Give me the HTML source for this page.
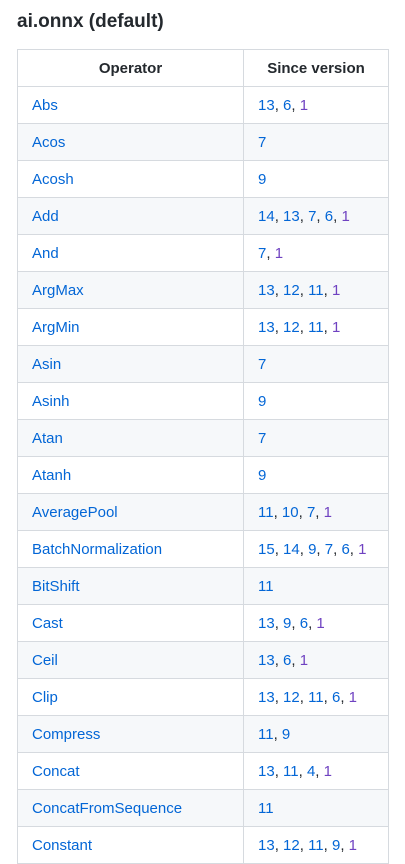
<!DOCTYPE html>
<html><head><meta charset="utf-8"><style>
body{margin:0;background:#fff;font-family:"Liberation Sans",sans-serif;color:#24292e;width:405px;height:863px;overflow:hidden}
h3{position:absolute;left:17px;top:9px;margin:0;font-size:19px;font-weight:bold;line-height:26px}
table{position:absolute;left:17px;top:49px;border-collapse:collapse;font-size:15px}
td,th{border:1px solid #d6dadf;height:36px;padding:0 14px;box-sizing:border-box}
th{text-align:center;font-weight:bold;font-size:15px;background:#fff}
tr{height:37px}
tr:nth-child(odd) td{background:#f6f8fa}
.a{color:#0366d6}.p{color:#6f42c1}
col.c1{width:226px}col.c2{width:145px}
</style></head><body>
<h3>ai.onnx (default)</h3>
<table><colgroup><col class="c1"><col class="c2"></colgroup>
<tr><th>Operator</th><th>Since version</th></tr>
<tr><td class="a">Abs</td><td><span class="a">13</span>, <span class="a">6</span>, <span class="p">1</span></td></tr>
<tr><td class="a">Acos</td><td><span class="a">7</span></td></tr>
<tr><td class="a">Acosh</td><td><span class="a">9</span></td></tr>
<tr><td class="a">Add</td><td><span class="a">14</span>, <span class="a">13</span>, <span class="a">7</span>, <span class="a">6</span>, <span class="p">1</span></td></tr>
<tr><td class="a">And</td><td><span class="a">7</span>, <span class="p">1</span></td></tr>
<tr><td class="a">ArgMax</td><td><span class="a">13</span>, <span class="a">12</span>, <span class="a">11</span>, <span class="p">1</span></td></tr>
<tr><td class="a">ArgMin</td><td><span class="a">13</span>, <span class="a">12</span>, <span class="a">11</span>, <span class="p">1</span></td></tr>
<tr><td class="a">Asin</td><td><span class="a">7</span></td></tr>
<tr><td class="a">Asinh</td><td><span class="a">9</span></td></tr>
<tr><td class="a">Atan</td><td><span class="a">7</span></td></tr>
<tr><td class="a">Atanh</td><td><span class="a">9</span></td></tr>
<tr><td class="a">AveragePool</td><td><span class="a">11</span>, <span class="a">10</span>, <span class="a">7</span>, <span class="p">1</span></td></tr>
<tr><td class="a">BatchNormalization</td><td><span class="a">15</span>, <span class="a">14</span>, <span class="a">9</span>, <span class="a">7</span>, <span class="a">6</span>, <span class="p">1</span></td></tr>
<tr><td class="a">BitShift</td><td><span class="a">11</span></td></tr>
<tr><td class="a">Cast</td><td><span class="a">13</span>, <span class="a">9</span>, <span class="a">6</span>, <span class="p">1</span></td></tr>
<tr><td class="a">Ceil</td><td><span class="a">13</span>, <span class="a">6</span>, <span class="p">1</span></td></tr>
<tr><td class="a">Clip</td><td><span class="a">13</span>, <span class="a">12</span>, <span class="a">11</span>, <span class="a">6</span>, <span class="p">1</span></td></tr>
<tr><td class="a">Compress</td><td><span class="a">11</span>, <span class="a">9</span></td></tr>
<tr><td class="a">Concat</td><td><span class="a">13</span>, <span class="a">11</span>, <span class="a">4</span>, <span class="p">1</span></td></tr>
<tr><td class="a">ConcatFromSequence</td><td><span class="a">11</span></td></tr>
<tr><td class="a">Constant</td><td><span class="a">13</span>, <span class="a">12</span>, <span class="a">11</span>, <span class="a">9</span>, <span class="p">1</span></td></tr>
</table>
</body></html>
